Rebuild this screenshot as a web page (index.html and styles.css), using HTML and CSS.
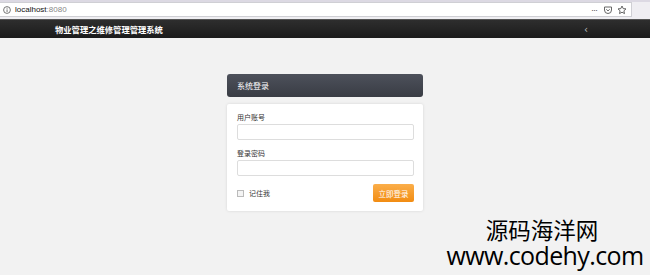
FILE: index.html
```html
<!DOCTYPE html>
<html lang="zh">
<head>
<meta charset="utf-8">
<title>物业管理之维修管理管理系统</title>
<link rel="stylesheet" href="styles.css">
</head>
<body>
<div class="chrome">
  <div class="tabstrip"></div>
  <div class="urlrow">
    <div class="urlbox">
      <svg class="info" width="8" height="8" viewBox="0 0 8 8"><circle cx="4" cy="4" r="3.4" fill="none" stroke="#666" stroke-width="0.9"/><rect x="3.6" y="3.4" width="0.9" height="2.6" fill="#666"/><rect x="3.6" y="1.8" width="0.9" height="0.9" fill="#666"/></svg>
      <span class="host">localhost</span><span class="port">:8080</span>
      <span class="spacer"></span>
      <span class="dots">···</span>
      <svg class="pocket" width="10" height="10" viewBox="0 0 10 10"><path d="M1.5 2h7v3a3.5 3.5 0 0 1-7 0z" fill="none" stroke="#666" stroke-width="1"/><path d="M3.3 4.3l1.7 1.6 1.7-1.6" fill="none" stroke="#666" stroke-width="1"/></svg>
      <svg class="star" width="10" height="10" viewBox="0 0 10 10"><path d="M5 1l1.2 2.6 2.8.3-2.1 1.9.6 2.8L5 7.2 2.5 8.6l.6-2.8L1 3.9l2.8-.3z" fill="none" stroke="#555" stroke-width="0.9" stroke-linejoin="round"/></svg>
    </div>
  </div>
</div>
<div class="navbar">
  <span class="brand">物业管理之维修管理管理系统</span>
  <span class="toggle">‹</span>
</div>
<main class="page">
  <div class="login">
    <div class="login-head">系统登录</div>
    <div class="login-body">
      <label class="field-label">用户账号</label>
      <div class="input"></div>
      <label class="field-label second">登录密码</label>
      <div class="input"></div>
      <div class="actions">
        <span class="check"></span>
        <span class="remember">记住我</span>
        <span class="spacer"></span>
        <button class="btn">立即登录</button>
      </div>
    </div>
  </div>
  <div class="watermark">
    <div class="wm-cn">源码海洋网</div>
    <div class="wm-en">www.codehy.com</div>
  </div>
</main>
</body>
</html>
```
FILE: styles.css
```css
* { box-sizing: border-box; }
html, body { margin: 0; padding: 0; }
body {
  width: 650px;
  height: 275px;
  overflow: hidden;
  background: #f2f2f2;
  font-family: "Noto Sans CJK SC", "Noto Sans", sans-serif;
}
.chrome { background: #efeef2; height: 19px; }
.tabstrip { height: 2px; background: #dcd9e3; }
.urlrow { height: 17px; padding: 0 18px 2px 0; }
.urlbox {
  height: 15px;
  background: #fff;
  border: 1px solid #cfcfd4;
  border-left: none;
  display: flex;
  align-items: center;
  padding-left: 3px;
  padding-right: 4px;
  font-family: "Liberation Sans", sans-serif;
  font-size: 8px;
}
.info { margin-right: 4px; }
.host { color: #111; }
.port { color: #888; }
.spacer { flex: 1; }
.dots { color: #555; font-size: 9px; letter-spacing: -1px; margin-right: 6px; line-height: 8px; }
.pocket { margin-right: 4px; }
.navbar {
  height: 19px;
  background: linear-gradient(#2e2e2e, #1b1b1b);
  border-top: 1px solid #555;
  display: flex;
  align-items: center;
  padding-left: 55px;
  padding-right: 62px;
  color: #fff;
}
.brand { font-size: 8.3px; font-weight: 700; flex: 1; }
.toggle { color: #bbb; font-size: 10px; font-family: "DejaVu Sans", sans-serif; }
.page {
  position: relative;
  height: 237px;
  padding-top: 36px;
  background: #f2f2f2;
}
.login { width: 196px; margin: 0 auto; }
.login-head {
  height: 23px;
  border-radius: 3px;
  background: linear-gradient(#4d515b, #393c44);
  color: #fff;
  font-size: 8px;
  padding-left: 10px;
  display: flex;
  align-items: center;
}
.login-body {
  margin-top: 7px;
  background: #fff;
  border-radius: 2px;
  box-shadow: 0 0 3px rgba(0,0,0,0.12);
  padding: 8px 9px 9px 10px;
}
.field-label { display: block; font-size: 7px; color: #333; line-height: 10px; }
.field-label.second { margin-top: 8px; }
.input {
  margin-top: 2px;
  height: 16px;
  border: 1px solid #ddd;
  border-radius: 2px;
  background: #fff;
}
.actions { display: flex; align-items: center; margin-top: 8px; }
.check {
  width: 7px; height: 7px;
  border: 1px solid #bbb;
  background: #f4f4f4;
  margin-right: 5px;
}
.remember { font-size: 7px; color: #333; }
.btn {
  width: 41px;
  height: 18px;
  border: none;
  border-radius: 2px;
  background: linear-gradient(#fbae4a, #f28c12);
  color: #fff;
  font-family: "Noto Sans CJK SC", sans-serif;
  font-size: 7.5px;
  padding: 0;
}
.watermark {
  position: absolute;
  right: 5px;
  top: 180px;
  width: 200px;
  text-align: center;
  color: #000;
}
.wm-cn { font-size: 22.5px; font-family: "Noto Sans CJK SC", sans-serif; line-height: 22px; margin-right: 6px; }
.wm-en { font-size: 25px; font-family: "Open Sans", "Liberation Sans", sans-serif; line-height: 25px; margin-top: 3px; letter-spacing: -0.6px; }
```
